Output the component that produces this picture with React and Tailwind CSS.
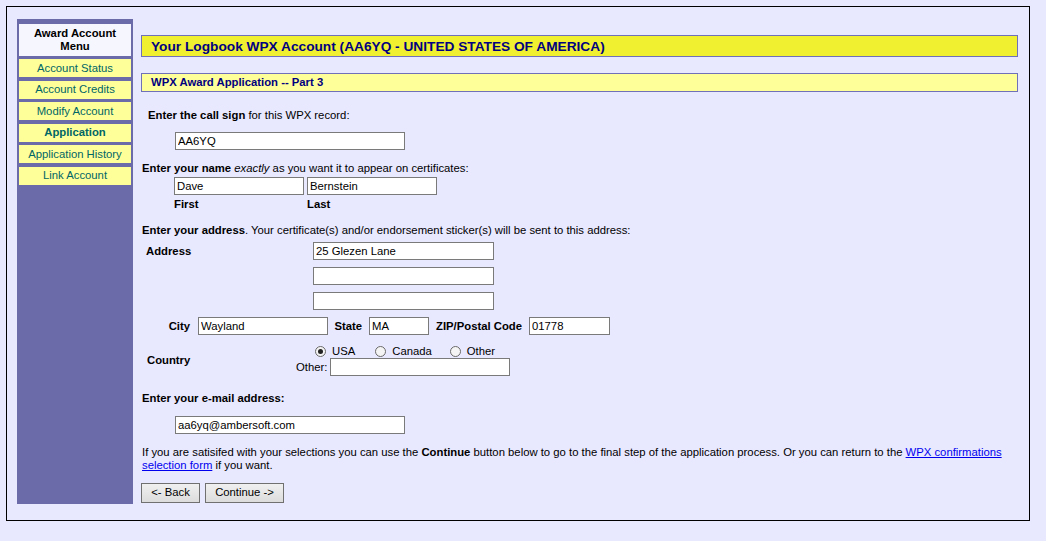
import React from 'react';

const menu = [
    { label: 'Account Status' },
    { label: 'Account Credits' },
    { label: 'Modify Account' },
    { label: 'Application', bold: true },
    { label: 'Application History' },
    { label: 'Link Account' },
];

const TextBox = ({ value = '', className = '' }) => (
    <input
        type="text"
        defaultValue={value}
        className={`h-[18px] border border-[#7a7a7a] bg-white px-[2px] text-[11.3px] text-black outline-none ${className}`}
    />
);

const Radio = ({ checked }) => (
    <span className="flex h-[11px] w-[11px] items-center justify-center rounded-full border border-[#6a6a6a] bg-[#f4f4f4]">
        {checked && <span className="h-[5px] w-[5px] rounded-full bg-[#222]"></span>}
    </span>
);

const Sidebar = () => (
    <div className="flex w-[116px] flex-col gap-[3.5px] bg-[#6b6ba9] px-[2px] pt-[5px]">
        <div className="flex h-[31.5px] items-center justify-center bg-[#f6f6ff] text-center text-[11.3px] font-bold leading-[13px] text-black">
            Award Account<br />Menu
        </div>
        {menu.map((item) => (
            <div
                key={item.label}
                className={`flex h-[18px] items-center justify-center bg-[#ffff99] text-[11.3px] text-[#006666] ${item.bold ? 'font-bold' : ''}`}
            >
                {item.label}
            </div>
        ))}
    </div>
);

export default function App() {
    return (
        <div className="min-h-screen bg-[#e8e8ff] pt-[6px] pl-[6px] font-['Liberation_Sans',Arial,sans-serif] text-[11.3px] leading-[13px] text-black">
            <div className="flex h-[515px] w-[1024px] border border-black pt-[12px] pr-[11px] pb-[16px] pl-[10px]">
                <Sidebar />

                <div className="ml-[8px] flex w-[877px] flex-col">
                    {/* Title bars */}
                    <div className="mt-[16px] flex h-[22px] items-center border border-[#7070b8] bg-[#f0f030] pl-[9px] text-[13.7px] font-bold text-[#000080]">
                        Your Logbook WPX Account (AA6YQ - UNITED STATES OF AMERICA)
                    </div>
                    <div className="mt-[16px] flex h-[19px] items-center border border-[#7070b8] bg-[#ffff99] pl-[9px] font-bold text-[#000080]">
                        WPX Award Application -- Part 3
                    </div>

                    {/* Call sign */}
                    <p className="mt-[17px] pl-[7px]">
                        <b>Enter the call sign</b> for this WPX record:
                    </p>
                    <div className="mt-[10px] pl-[34px]">
                        <TextBox value="AA6YQ" className="w-[230px]" />
                    </div>

                    {/* Name */}
                    <p className="mt-[12px] pl-[1px]">
                        <b>Enter your name</b> <i>exactly</i> as you want it to appear on certificates:
                    </p>
                    <div className="mt-[2px] flex gap-[3px] pl-[33px]">
                        <TextBox value="Dave" className="w-[130px]" />
                        <TextBox value="Bernstein" className="w-[130px]" />
                    </div>
                    <div className="mt-[3px] flex gap-[3px] pl-[33px] font-bold">
                        <span className="w-[130px]">First</span>
                        <span className="w-[130px]">Last</span>
                    </div>

                    {/* Address */}
                    <p className="mt-[13px] pl-[1px]">
                        <b>Enter your address</b>. Your certificate(s) and/or endorsement sticker(s) will be sent to this address:
                    </p>
                    <div className="mt-[5px] flex items-center">
                        <span className="w-[172px] pl-[5px] font-bold">Address</span>
                        <TextBox value="25 Glezen Lane" className="w-[181px]" />
                    </div>
                    <div className="mt-[7px] pl-[172px]">
                        <TextBox className="w-[181px]" />
                    </div>
                    <div className="mt-[7px] pl-[172px]">
                        <TextBox className="w-[181px]" />
                    </div>
                    <div className="mt-[7px] flex items-center font-bold">
                        <span className="w-[57px] pr-[8px] text-right">City</span>
                        <TextBox value="Wayland" className="w-[130px] font-normal" />
                        <span className="w-[41px] pr-[7px] text-right">State</span>
                        <TextBox value="MA" className="w-[60px] font-normal" />
                        <span className="w-[100px] pr-[7px] text-right">ZIP/Postal Code</span>
                        <TextBox value="01778" className="w-[81px] font-normal" />
                    </div>

                    {/* Country */}
                    <div className="mt-[9px] flex">
                        <div className="flex w-[155px] items-center pl-[6px] font-bold">Country</div>
                        <div className="flex flex-col">
                            <div className="flex h-[14px] items-center pl-[19px]">
                                <Radio checked />
                                <span className="ml-[6px]">USA</span>
                                <span className="ml-[20px]"><Radio /></span>
                                <span className="ml-[6px]">Canada</span>
                                <span className="ml-[18px]"><Radio /></span>
                                <span className="ml-[6px]">Other</span>
                            </div>
                            <div className="flex items-center">
                                <span>Other:</span>
                                <TextBox className="ml-[3px] w-[180px]" />
                            </div>
                        </div>
                    </div>

                    {/* Email */}
                    <p className="mt-[16px] pl-[1px] font-bold">Enter your e-mail address:</p>
                    <div className="mt-[11px] pl-[34px]">
                        <TextBox value="aa6yq@ambersoft.com" className="w-[230px]" />
                    </div>

                    <p className="mt-[12px] pl-[1px] leading-[13.3px]">
                        If you are satisifed with your selections you can use the <b>Continue</b> button below to go to the final step of the application process. Or you can return to the{' '}
                        <a href="#" className="text-[#0000ee] underline">WPX confirmations selection form</a> if you want.
                    </p>

                    <div className="mt-[10px] flex gap-[5px]">
                        <button className="h-[20px] w-[59px] border border-[#707070] bg-gradient-to-b from-[#f0f0f0] to-[#dcdcdc] text-[11.3px] text-black">
                            &lt;- Back
                        </button>
                        <button className="h-[20px] w-[79px] border border-[#707070] bg-gradient-to-b from-[#f0f0f0] to-[#dcdcdc] text-[11.3px] text-black">
                            Continue -&gt;
                        </button>
                    </div>
                </div>
            </div>
        </div>
    );
}
